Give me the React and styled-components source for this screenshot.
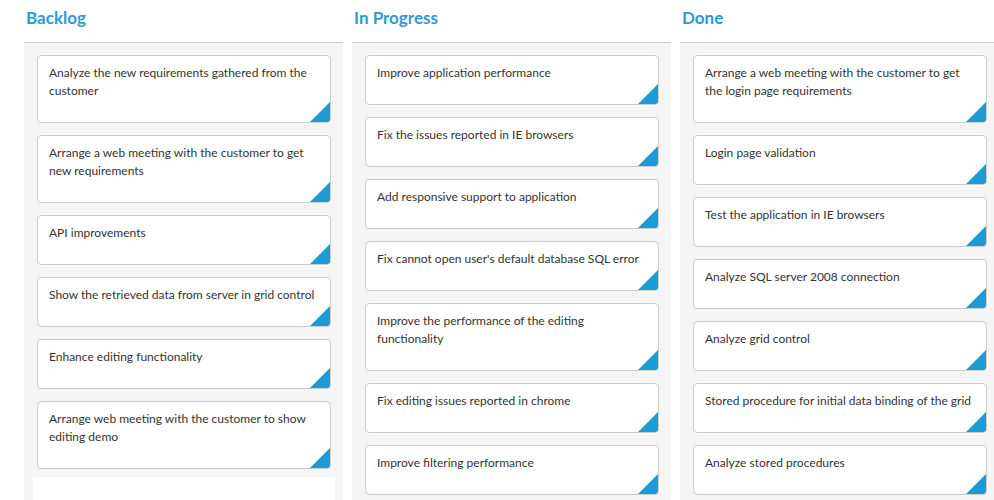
import styled, { createGlobalStyle } from 'styled-components';

const GlobalStyle = createGlobalStyle`
  html, body {
    margin: 0;
    padding: 0;
    background: #fff;
    overflow: hidden;
  }
  body {
    font-family: Lato, "Open Sans", sans-serif;
  }
`;

const Board = styled.div`
  display: flex;
  gap: 9px;
  padding-left: 24px;
  width: max-content;
  height: 500px;
`;

const Column = styled.div`
  width: 319px;
  display: flex;
  flex-direction: column;
`;

const Header = styled.div`
  flex-shrink: 0;
  height: 43px;
  box-sizing: border-box;
  padding: 7px 0 0 2px;
  font-size: 17px;
  font-weight: 700;
  color: #2e99d6;
  border-bottom: 1px solid #cfcfcf;
`;

const Body = styled.div`
  flex: 1;
  min-height: 0;
  overflow: hidden;
  background: #f5f5f5;
  padding: 12px 12px 0 13px;
  display: flex;
  flex-direction: column;
  gap: 12px;
`;

const Card = styled.div`
  flex-shrink: 0;
  position: relative;
  background: #fff;
  border: 1px solid #cccccc;
  border-radius: 4px;
  padding: 8px 11px 22px 11px;
  font-size: 12px;
  line-height: 18px;
  color: #333;
  overflow: hidden;

  &::after {
    content: '';
    position: absolute;
    right: 0;
    bottom: 0;
    width: 0;
    height: 0;
    border-style: solid;
    border-width: 0 0 20px 20px;
    border-color: transparent transparent #1b9ad6 transparent;
  }
`;

const DropArea = styled.div`
  flex-shrink: 0;
  background: #fff;
  height: 40px;
  margin: -4px -4px 0 -4px;
`;

const columns = [
  {
    title: 'Backlog',
    cards: [
      'Analyze the new requirements gathered from the customer',
      'Arrange a web meeting with the customer to get new requirements',
      'API improvements',
      'Show the retrieved data from server in grid control',
      'Enhance editing functionality',
      'Arrange web meeting with the customer to show editing demo',
    ],
    drop: true,
  },
  {
    title: 'In Progress',
    cards: [
      'Improve application performance',
      'Fix the issues reported in IE browsers',
      'Add responsive support to application',
      "Fix cannot open user's default database SQL error",
      'Improve the performance of the editing functionality',
      'Fix editing issues reported in chrome',
      'Improve filtering performance',
    ],
  },
  {
    title: 'Done',
    cards: [
      'Arrange a web meeting with the customer to get the login page requirements',
      'Login page validation',
      'Test the application in IE browsers',
      'Analyze SQL server 2008 connection',
      'Analyze grid control',
      'Stored procedure for initial data binding of the grid',
      'Analyze stored procedures',
    ],
  },
];

const App = () => (
  <>
    <GlobalStyle />
    <Board>
      {columns.map((col) => (
        <Column key={col.title}>
          <Header>{col.title}</Header>
          <Body>
            {col.cards.map((text) => (
              <Card key={text}>{text}</Card>
            ))}
            {col.drop && <DropArea />}
          </Body>
        </Column>
      ))}
    </Board>
  </>
);

export default App;
